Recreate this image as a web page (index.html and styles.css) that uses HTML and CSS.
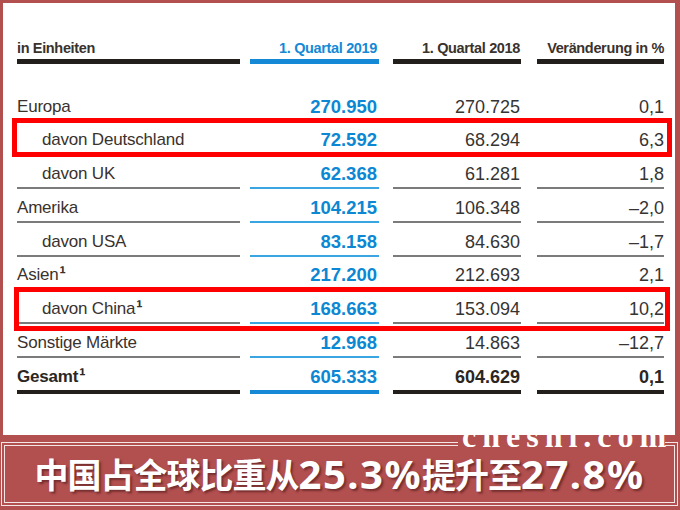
FILE: index.html
```html
<!DOCTYPE html>
<html lang="de">
<head>
<meta charset="utf-8">
<title>Absatz nach Regionen</title>
<link rel="stylesheet" href="styles.css">
</head>
<body>
<div class="page">
  <div class="panel">
    <div class="row head">
      <div class="c lab">in Einheiten</div>
      <div class="c n q19">1. Quartal 2019</div>
      <div class="c n q18">1. Quartal 2018</div>
      <div class="c n pct">Veränderung in %</div>
    </div>
    <div class="body">
      <div class="row">
        <div class="c lab">Europa</div>
        <div class="c n q19">270.950</div>
        <div class="c n q18">270.725</div>
        <div class="c n pct">0,1</div>
      </div>
      <div class="row">
        <div class="c lab sub">davon Deutschland</div>
        <div class="c n q19">72.592</div>
        <div class="c n q18">68.294</div>
        <div class="c n pct">6,3</div>
      </div>
      <div class="row">
        <div class="c lab sub">davon UK</div>
        <div class="c n q19">62.368</div>
        <div class="c n q18">61.281</div>
        <div class="c n pct">1,8</div>
      </div>
      <div class="row">
        <div class="c lab">Amerika</div>
        <div class="c n q19">104.215</div>
        <div class="c n q18">106.348</div>
        <div class="c n pct">–2,0</div>
      </div>
      <div class="row">
        <div class="c lab sub">davon USA</div>
        <div class="c n q19">83.158</div>
        <div class="c n q18">84.630</div>
        <div class="c n pct">–1,7</div>
      </div>
      <div class="row">
        <div class="c lab">Asien<span class="fn">¹</span></div>
        <div class="c n q19">217.200</div>
        <div class="c n q18">212.693</div>
        <div class="c n pct">2,1</div>
      </div>
      <div class="row">
        <div class="c lab sub">davon China<span class="fn">¹</span></div>
        <div class="c n q19">168.663</div>
        <div class="c n q18">153.094</div>
        <div class="c n pct">10,2</div>
      </div>
      <div class="row">
        <div class="c lab">Sonstige Märkte</div>
        <div class="c n q19">12.968</div>
        <div class="c n q18">14.863</div>
        <div class="c n pct">–12,7</div>
      </div>
      <div class="row tot">
        <div class="c lab">Gesamt<span class="fn">¹</span></div>
        <div class="c n q19">605.333</div>
        <div class="c n q18">604.629</div>
        <div class="c n pct">0,1</div>
      </div>
    </div>
    <div class="mark mark-de"></div>
    <div class="mark mark-cn"></div>
  </div>
  <div class="banner">
    <div class="banner-in">中国占全球比重从<span class="num">25.3%</span>提升至<span class="num">27.8%</span></div>
  </div>
  <div class="wm"><span class="wm-text">cheshi.com</span></div>
</div>
</body>
</html>
```
FILE: styles.css
```css
html, body {
  margin: 0;
  padding: 0;
}
body {
  width: 680px;
  height: 510px;
  overflow: hidden;
  background: #b24f4f;
  font-family: "Liberation Sans", Arial, sans-serif;
}
.page {
  position: relative;
  width: 680px;
  height: 510px;
  box-sizing: border-box;
  padding: 3px 5px 0 3px;
  display: flex;
  flex-direction: column;
}
.panel {
  position: relative;
  height: 432px;
  flex: none;
  box-sizing: border-box;
  background: #fff;
  padding: 36.6px 11px 0 14px;
}
.row {
  display: grid;
  grid-template-columns: 223px 139px 142px 143px;
  height: 33.75px;
  align-items: end;
}
.c {
  line-height: 20px;
  padding-bottom: 3px;
  border-bottom: 2px solid #7b7b7b;
  white-space: nowrap;
  color: #363433;
  font-size: 18px;
}
.n { text-align: right; }
.q19 {
  margin-left: 10px;
  padding-right: 2px;
  border-bottom-color: #3aa6e1;
  color: #0c87d3;
  font-weight: 700;
  font-size: 18.5px;
}
.q18 { margin-left: 14px; padding-right: 1px; }
.pct { margin-left: 16px; }
.lab {
  font-size: 17px;
  letter-spacing: -0.2px;
  color: #3a322e;
}
.sub { padding-left: 25px; }
.fn {
  font-weight: 700;
  font-size: 19px;
  margin-left: 1px;
}
.head { height: auto; }
.head .c {
  font-size: 14.5px;
  line-height: 17px;
  font-weight: 700;
  letter-spacing: -0.35px;
  padding-bottom: 2.5px;
  border-bottom: 5px solid #231f1c;
  color: #3a322d;
}
.head .q19 {
  color: #1589d6;
  border-bottom-color: #1589d6;
}
.body { margin-top: 23.85px; }
.tot { height: 35.75px; }
.tot .c {
  font-weight: 700;
  border-bottom: 4px solid #231f1c;
  color: #2b2622;
}
.tot .q19 {
  color: #0c87d3;
  border-bottom-color: #1589d6;
}
.mark {
  position: absolute;
  box-sizing: border-box;
  border: 5px solid #ff0000;
}
.mark-de {
  left: 9px;
  top: 115px;
  width: 660px;
  height: 39px;
}
.mark-cn {
  left: 11px;
  top: 283.7px;
  width: 656px;
  height: 44px;
}
.banner {
  flex: none;
  height: 64px;
  margin: 7px -3px 0 -2px;
  box-sizing: border-box;
  border: 1.5px solid #f4e6e6;
  padding: 2px;
}
.banner-in {
  height: 100%;
  box-sizing: border-box;
  border: 1.5px solid #f4e6e6;
  display: flex;
  align-items: center;
  justify-content: center;
  color: #fff;
  font-family: "Noto Sans CJK SC", "Noto Sans", sans-serif;
  font-weight: 700;
  font-size: 34px;
  line-height: 1;
  letter-spacing: -1px;
  text-shadow: 2px 2px 2px rgba(70, 20, 20, 0.55);
  white-space: nowrap;
}
.num {
  font-family: "Noto Sans", "Open Sans", sans-serif;
  font-size: 40px;
  line-height: 1;
  letter-spacing: 1.5px;
}
.wm {
  position: absolute;
  left: 458px;
  top: 436px;
  width: 207px;
  height: 12px;
  background: #b24f4f;
}
.wm-text {
  display: block;
  margin-top: -11.8px;
  padding-left: 4px;
  font-family: "Liberation Serif", serif;
  font-weight: 700;
  font-size: 32px;
  line-height: 24px;
  letter-spacing: 6px;
  color: #fff;
  white-space: nowrap;
}
```
